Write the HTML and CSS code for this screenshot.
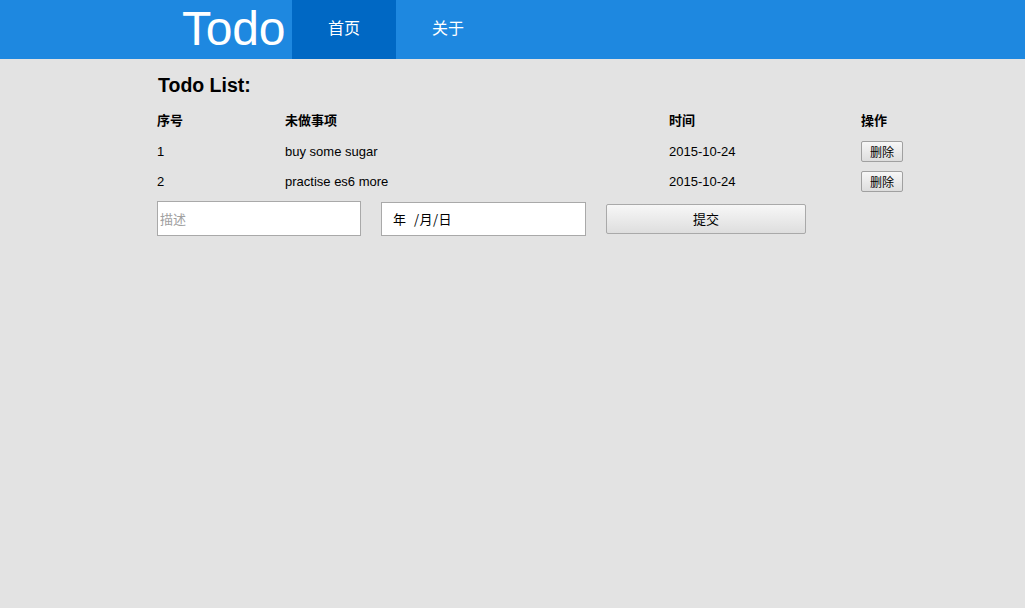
FILE: index.html
```html
<!DOCTYPE html>
<html lang="zh-CN">
<head>
<meta charset="utf-8">
<title>Todo</title>
<link rel="stylesheet" href="styles.css">
</head>
<body>
<header class="topbar">
  <div class="brand">Todo</div>
  <nav class="nav">
    <a class="nav-item active">首页</a>
    <a class="nav-item">关于</a>
  </nav>
</header>
<main class="content">
  <h2 class="title">Todo List:</h2>
  <table class="todo-table">
    <thead>
      <tr><th class="c1">序号</th><th class="c2">未做事项</th><th class="c3">时间</th><th class="c4">操作</th></tr>
    </thead>
    <tbody>
      <tr><td>1</td><td>buy some sugar</td><td>2015-10-24</td><td><button class="del">删除</button></td></tr>
      <tr><td>2</td><td>practise es6 more</td><td>2015-10-24</td><td><button class="del">删除</button></td></tr>
    </tbody>
  </table>
  <form class="add-form">
    <input class="desc" type="text" placeholder="描述">
    <div class="date-box">年 /月/日</div>
    <button type="button" class="submit">提交</button>
  </form>
</main>
</body>
</html>
```

FILE: styles.css
```css
html, body {
  margin: 0;
  padding: 0;
}
body {
  background: #e3e3e3;
  font-family: "Liberation Sans", Arial, "Noto Sans CJK SC", sans-serif;
  color: #000;
  min-height: 608px;
}
.topbar {
  background: #1e88e0;
  height: 59px;
  display: flex;
  padding-left: 182px;
}
.brand {
  color: #fff;
  font-family: "Liberation Sans", Arial, sans-serif;
  font-size: 48px;
  letter-spacing: -0.2px;
  line-height: 57px;
  width: 110px;
}
.nav {
  display: flex;
}
.nav-item {
  width: 104px;
  text-align: center;
  color: #fff;
  font-family: "Noto Sans CJK SC", sans-serif;
  font-size: 16px;
  line-height: 55px;
}
.nav-item.active {
  background: #0068c4;
}
.content {
  padding-left: 157px;
  width: 768px;
}
.title {
  font-size: 19.5px;
  font-weight: bold;
  margin: 14px 0 0 1px;
  line-height: 24px;
}
.todo-table {
  border-collapse: collapse;
  margin-top: 8px;
  width: 768px;
  font-size: 13px;
}
.todo-table th, .todo-table td {
  text-align: left;
  padding: 0;
  height: 30px;
}
.todo-table th {
  font-family: "Noto Sans CJK SC", sans-serif;
  font-weight: bold;
  font-size: 13px;
  height: 28px;
  padding-bottom: 3px;
}
.c1 { width: 128px; }
.c2 { width: 384px; }
.c3 { width: 192px; }
.c4 { width: 64px; }
.del {
  font-family: "Noto Sans CJK SC", sans-serif;
  font-size: 12px;
  width: 42px;
  height: 21px;
  padding: 0;
  line-height: 17px;
  border: 1px solid #a0a0a0;
  border-radius: 2px;
  background: linear-gradient(#f7f7f7, #dddddd);
  color: #000;
}
.add-form {
  display: flex;
  align-items: center;
  gap: 20px;
  margin-top: 5px;
}
.desc {
  box-sizing: border-box;
  width: 204px;
  height: 35px;
  border: 1px solid #a9a9a9;
  background: #fff;
  padding: 0 2px;
  margin: 0;
  font-family: "Noto Sans CJK SC", sans-serif;
  font-size: 13px;
  outline: none;
}
.desc::placeholder {
  color: #a0a0a0;
}
.date-box {
  box-sizing: border-box;
  width: 205px;
  height: 34px;
  border: 1px solid #a9a9a9;
  background: #fff;
  padding-left: 11px;
  font-family: "Noto Sans CJK SC", sans-serif;
  font-size: 13px;
  line-height: 32px;
  word-spacing: 4px;
  letter-spacing: 0.5px;
}
.submit {
  box-sizing: border-box;
  width: 200px;
  height: 30px;
  border: 1px solid #a9a9a9;
  border-radius: 2px;
  background: linear-gradient(#f7f7f7, #dedede);
  font-family: "Noto Sans CJK SC", sans-serif;
  font-size: 13px;
  color: #000;
  padding: 0;
}
```
